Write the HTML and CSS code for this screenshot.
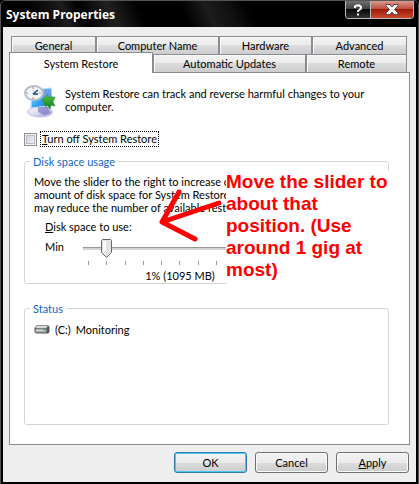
FILE: index.html
```
<!DOCTYPE html>
<html lang="en">

<head>
  <meta charset="UTF-8">
  <meta name="viewport" content="width=device-width, initial-scale=1.0">
  <title>System Properties</title>
  <link rel="stylesheet" href="styles.css">
</head>

<body>
  <main class="window">
    <header class="titlebar">
      <h1>System Properties</h1>
      <div class="captions">
        <button class="caption help" type="button" aria-label="Help">
          <svg width="10" height="12" viewBox="0 0 10 12"><path d="M2 4V2.500L3.500 1.500h3L8 3v1.500L5 7v1M5 9.500v2" fill="none" stroke="#fff" stroke-width="2"/></svg>
        </button>
        <button class="caption close" type="button" aria-label="Close">
          <svg width="14" height="11" viewBox="0 0 14 11"><path d="M1 .5h4l2 2.500 2-2.500h4v1.500L9.500 5.500 13 9v1.500H9L7 8l-2 2.500H1V9l3.500-3.500L1 2z" fill="#fff" stroke="#5b4444"/></svg>
        </button>
      </div>
    </header>

    <div class="client">
      <nav class="tabs">
        <div class="tab-row back">
          <button class="tab" type="button">General</button>
          <button class="tab" type="button">Computer Name</button>
          <button class="tab" type="button">Hardware</button>
          <button class="tab" type="button">Advanced</button>
        </div>
        <div class="tab-row front">
          <button class="tab active" type="button">System Restore</button>
          <button class="tab" type="button">Automatic Updates</button>
          <button class="tab" type="button">Remote</button>
        </div>
      </nav>

      <section class="panel">
        <div class="intro">
          <svg width="32" height="33" viewBox="0 0 32 33">
            <defs>
              <linearGradient id="screen" x1="0" y1="0" x2="1" y2="1">
                <stop offset="0" stop-color="#b9e4ff"/>
                <stop offset=".5" stop-color="#38a8f5"/>
                <stop offset="1" stop-color="#1260d8"/>
              </linearGradient>
              <linearGradient id="base" x1="0" y1="0" x2="1" y2="1">
                <stop offset="0" stop-color="#f6f6ff"/>
                <stop offset=".5" stop-color="#dcdcf0"/>
                <stop offset="1" stop-color="#8a8acb"/>
              </linearGradient>
              <linearGradient id="arrow" x1="0" y1="0" x2="0" y2="1">
                <stop offset="0" stop-color="#5ac83c"/>
                <stop offset="1" stop-color="#0b7a1c"/>
              </linearGradient>
            </defs>
            <ellipse cx="16" cy="27" rx="12.500" ry="5" fill="url(#base)" stroke="#c3c3df"/>
            <path d="M14 21l10 1 2 6-6 2-6-3z" fill="#7777c4" opacity=".7"/>
            <path d="M8 5l19-2 2 17-22 3z" fill="url(#screen)" stroke="#c4d8f0"/>
            <path d="M20 5l6-.5 1 9-7 1z" fill="#6f9ee8"/>
            <path d="M18 15l6-6v3h7l-2 5 2 4-4-1-1 4-3-4-1 2z" fill="url(#arrow)" stroke="#168a28" stroke-width=".5"/>
            <ellipse cx="10" cy="8" rx="9" ry="7" fill="#eef7ff" stroke="#b4c0ce" stroke-width="2"/>
            <path d="M9 9l5-4M9 9h5" stroke="#234a7c" stroke-width="1.500"/>
            <path d="M9 2v2M9 12v2M2 8h2M15 8h2" stroke="#ee9b80" stroke-width="1.500"/>
          </svg>
          <p>System Restore can track and reverse harmful changes to your computer.</p>
        </div>

        <div class="turn-off">
          <input type="checkbox" id="turnOff">
          <label for="turnOff"><u>T</u>urn off System Restore</label>
        </div>

        <fieldset class="group disk">
          <legend>Disk space usage</legend>
          <p class="hint">Move the slider to the right to increase or<br>amount of disk space for System Restore<br>may reduce the number of available restore</p>
          <div class="usage">
            <label for="space"><u>D</u>isk space to use:</label>
            <div class="slider-row">
              <span class="min">Min</span>
              <div class="slider">
                <input type="range" id="space" min="0" max="100" value="10">
                <div class="ticks"><i></i><i></i><i></i><i></i><i></i><i></i><i></i><i></i><i></i><i></i><i></i></div>
                <output for="space">1% (1095 MB)</output>
              </div>
            </div>
          </div>
        </fieldset>

        <fieldset class="group status">
          <legend>Status</legend>
          <div class="drive">
            <svg width="16" height="11" viewBox="0 0 16 11">
              <path d="M3 1h11l1.500 2v5L14 9.500H2L.5 8V4z" fill="#555"/>
              <path d="M3 1.500h11L12.500 4H1.500z" fill="#d8d8d8"/>
              <path d="M1.500 4.500h11v4h-11z" fill="#aaa"/>
              <path d="M2 6.500h7" stroke="#ddd"/>
              <path d="M10 5.500h2" stroke="#20c030"/>
            </svg>
            <span>(C:)</span>
            <span>Monitoring</span>
          </div>
        </fieldset>

        <svg class="pointer" width="76" height="60" viewBox="0 0 76 60">
          <path d="M68 17L11 36L28 6M11 36L44 53" fill="none" stroke="#f00" stroke-width="5" stroke-linecap="round" stroke-linejoin="round"/>
        </svg>
        <p class="note">Move the slider to about that position. (Use around 1 gig at most)</p>
      </section>

      <footer class="actions">
        <button class="btn default" type="button">OK</button>
        <button class="btn" type="button">Cancel</button>
        <button class="btn" type="button"><u>A</u>pply</button>
      </footer>
    </div>
  </main>
</body>

</html>
```

FILE: styles.css
```
* {
  box-sizing: border-box;
}

body {
  margin: 0;
  background-color: #000;
  color: #000;
  font-family: Lato, "Liberation Sans", Arial, sans-serif;
  font-size: 11px;
  line-height: 13px;
}

h1,
p {
  margin: 0;
}

button,
input {
  margin: 0;
  padding: 0;
  font: inherit;
  color: inherit;
}

.window {
  min-height: 100vh;
  padding: 0 2px 2px;
  border: 1px solid #555;
  border-radius: 5px 5px 0 0;
  background-color: #000;
  display: flex;
  flex-direction: column;
}

.titlebar {
  display: flex;
  justify-content: space-between;
  height: 26px;
  padding: 0 2px 0 3px;
  background: linear-gradient(65deg, #000 8%, #1c1c1c 16%, #000 20%, #202020 27%, #000 34%, #000 44%, #1c1c1c 50%, #111 55%, #000 60%);
}

h1 {
  font-family: "Open Sans", "Noto Sans", sans-serif;
  font-size: 12px;
  font-weight: bold;
  line-height: 28px;
  color: #fff;
}

.captions {
  display: flex;
  height: 18px;
  border: 1px solid #bbb;
  border-top: 0;
  border-radius: 0 0 4px 4px;
  overflow: hidden;
}

.caption {
  display: flex;
  align-items: center;
  justify-content: center;
  border: 0;
}

.help {
  width: 25px;
  border-right: 1px solid #bbb;
  background: linear-gradient(#707070, #444 45%, #080808 50%, #333);
}

.close {
  width: 42px;
  background: linear-gradient(#d99a90, #bd5143 45%, #a01c0a 50%, #c9482e);
}

.client {
  flex: 1;
  padding: 9px 6px;
  background-color: #eee;
}

.tab-row {
  display: grid;
  padding: 0 3px 0 2px;
}

.back {
  grid-template-columns: 85fr 123fr 93fr 95fr;
}

.front {
  grid-template-columns: 142fr 153fr 101fr;
}

.tab {
  height: 18px;
  border: 1px solid #898c95;
  border-bottom: 0;
  background: linear-gradient(#f3f3f3, #ebebeb 50%, #dcdcdc 50%, #cdcdcd);
  box-shadow: inset 1px 1px #fafafa;
}

.tab.active {
  position: relative;
  z-index: 1;
  height: 21px;
  margin: -2px 0 -1px -2px;
  background: #fff;
  box-shadow: none;
}

.panel {
  position: relative;
  min-height: 372px;
  padding: 12px 20px 19px 14px;
  border: 1px solid #898c95;
  background-color: #fff;
}

.intro {
  display: flex;
  gap: 9px;
}

.intro svg {
  flex: none;
}

.intro p {
  max-width: 310px;
  padding-top: 2px;
}

.turn-off {
  display: flex;
  align-items: center;
  gap: 3px;
  margin-top: 13px;
}

.turn-off input {
  appearance: none;
  width: 13px;
  height: 13px;
  border: 1px solid #8e8f8f;
  background: linear-gradient(135deg, #c8cbd0, #f8f8f8);
  box-shadow: inset 0 0 0 1px #f4f4f4, inset 0 0 0 2px #b8bcc2;
}

.turn-off label {
  padding: 0 1px 1px;
  border: 1px dotted #000;
}

.group {
  min-width: 0;
  margin: 0;
  padding: 0 9px;
  border: 1px solid #d5d5d5;
  border-radius: 3px;
}

.group legend {
  padding: 0 3px;
  margin-left: -4px;
  color: #1464c8;
}

.disk {
  height: 129px;
  margin-top: 8px;
}

.hint {
  padding-top: 7px;
  white-space: nowrap;
}

.usage {
  padding: 6px 0 0 11px;
}

.slider-row {
  display: flex;
  margin-top: 7px;
}

.min {
  width: 38px;
}

.slider {
  width: 194px;
}

.slider input {
  appearance: none;
  display: block;
  width: 100%;
  height: 19px;
  margin-top: -1px;
  background: linear-gradient(#9a9a9a 1px, #d4d4d4 1px) center / 100% 3px no-repeat;
}

.slider input::-webkit-slider-thumb {
  appearance: none;
  width: 11px;
  height: 19px;
  background: url("data:image/svg+xml,%3Csvg xmlns='http://www.w3.org/2000/svg' width='11' height='19'%3E%3Cpath d='M1.500.5h8l1 1v12l-5 5-5-5v-12z' fill='%23e2e2e2' stroke='%23666'/%3E%3Cpath d='M2 2h3v14l-3-3z' fill='%23fafafa'/%3E%3C/svg%3E");
}

.ticks {
  display: flex;
  justify-content: space-between;
  padding: 3px 5px 0;
}

.ticks i {
  width: 1px;
  height: 4px;
  background-color: #999;
}

.slider output {
  display: block;
  padding-top: 4px;
  text-align: center;
}

.status {
  height: 123px;
  margin-top: 18px;
}

.drive {
  display: flex;
  align-items: center;
  gap: 5px;
  padding-top: 8px;
}

/* hand-made annotation that lies over the dialog */
.pointer {
  position: absolute;
  left: 141px;
  top: 113px;
}

.note {
  position: absolute;
  left: 216px;
  top: 98px;
  width: 176px;
  height: 122px;
  padding-right: 10px;
  background-color: #fff;
  color: #f00;
  font-family: "Liberation Sans", Arial, sans-serif;
  font-size: 19px;
  font-weight: bold;
  line-height: 22px;
}

.actions {
  display: flex;
  justify-content: flex-end;
  gap: 8px;
  padding: 7px 1px 0 0;
}

.btn {
  width: 73px;
  height: 21px;
  border: 1px solid #707070;
  border-radius: 3px;
  background: linear-gradient(#f3f3f3, #ebebeb 50%, #dcdcdc 50%, #cdcdcd);
  box-shadow: inset 0 0 0 1px #fafafa;
}

.btn.default {
  border-color: #2c7cb0;
  box-shadow: inset 0 0 0 1px #48c8f0;
}
```
